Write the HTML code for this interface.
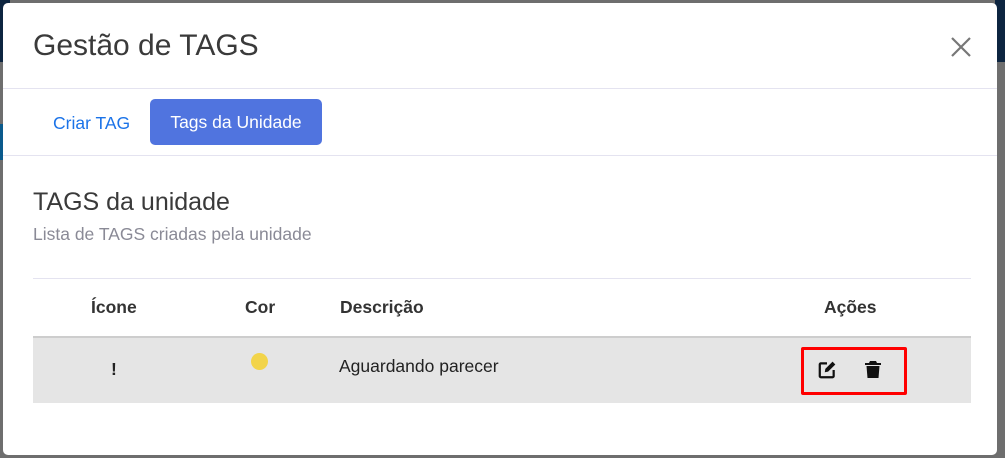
<!DOCTYPE html>
<html><head><meta charset="utf-8"><style>
*{margin:0;padding:0;box-sizing:border-box}
body{width:1005px;height:458px;overflow:hidden;background:#6e6e6e;font-family:"Liberation Sans",Arial,sans-serif;position:relative}
.strip1{position:absolute;left:0;top:0;width:10px;height:62px;background:#0d2540}
.strip2{position:absolute;left:0;top:124px;width:10px;height:36px;background:#0a5a8c}
.strip3{position:absolute;right:0;top:0;width:10px;height:62px;background:#0d2540}
.modal{position:absolute;left:3px;top:3px;width:994px;height:452px;background:#fff;border-radius:5px;overflow:hidden}
.abs{position:absolute}
h1{position:absolute;left:30px;top:26px;font-size:30px;font-weight:normal;color:#3a3a3a;white-space:nowrap}
.hr{position:absolute;left:0;width:994px;height:1px;background:#e4e3f0}
.close{position:absolute;left:947px;top:33px;width:22px;height:22px}
.tab1{position:absolute;left:50px;top:110px;font-size:17.5px;color:#1b73e8}
.tab2{position:absolute;left:147px;top:96px;width:172px;height:46px;background:#5074df;border-radius:5px;color:#fff;font-size:17.5px;line-height:46px;text-align:center;white-space:nowrap}
h2{position:absolute;left:30px;top:185px;font-size:25px;font-weight:normal;color:#3a3a3a;white-space:nowrap}
.sub{position:absolute;left:30px;top:221px;font-size:17.5px;color:#8a8a96;white-space:nowrap}
.th{position:absolute;top:294px;font-size:17.5px;font-weight:bold;color:#333}
.row{position:absolute;left:30px;top:333px;width:938px;height:67px;background:#e5e5e5;border-top:2px solid #cdcdcd}
.td{position:absolute;font-size:17.5px;color:#222;white-space:nowrap}
</style></head><body>
<div class="strip1"></div><div class="strip2"></div><div class="strip3"></div>
<div class="modal">
<h1>Gestão de TAGS</h1>
<svg class="close" viewBox="0 0 22 22"><path d="M2 2L20 20M20 2L2 20" stroke="#777" stroke-width="2.2"/></svg>
<div class="hr" style="top:85px"></div>
<div class="tab1">Criar TAG</div>
<div class="tab2">Tags da Unidade</div>
<div class="hr" style="top:152px"></div>
<h2>TAGS da unidade</h2>
<div class="sub">Lista de TAGS criadas pela unidade</div>
<div class="hr" style="top:275px;left:30px;width:938px"></div>
<div class="th" style="left:88px">Ícone</div>
<div class="th" style="left:242px">Cor</div>
<div class="th" style="left:337px">Descrição</div>
<div class="th" style="left:821px">Ações</div>
<div class="row">
 <div class="td" style="left:78px;top:21px;font-weight:bold">!</div>
 <div class="abs" style="left:218px;top:15px;width:17px;height:17px;border-radius:50%;background:#f2d44a"></div>
 <div class="td" style="left:306px;top:18px">Aguardando parecer</div>
 <div class="abs" style="left:768px;top:9px;width:106px;height:48px;border:3px solid #f00;border-radius:2px"></div>
 <svg class="abs" style="left:784px;top:22px" width="20" height="20" viewBox="0 0 18 18"><path d="M9 3H3.5a1 1 0 0 0-1 1v10.5a1 1 0 0 0 1 1H14a1 1 0 0 0 1-1V9" fill="none" stroke="#111" stroke-width="2"/><path d="M7 11l.5-3L14 1.5l2.5 2.5L10 10.5z" fill="#111"/></svg>
 <svg class="abs" style="left:832px;top:22px" width="16" height="19" viewBox="0 0 16 19"><path d="M5 1h6l1 2h4v2H0V3h4z" fill="#111"/><path d="M1.5 6h13l-1 12h-11z" fill="#111"/></svg>
</div>
</div>
</body></html>
